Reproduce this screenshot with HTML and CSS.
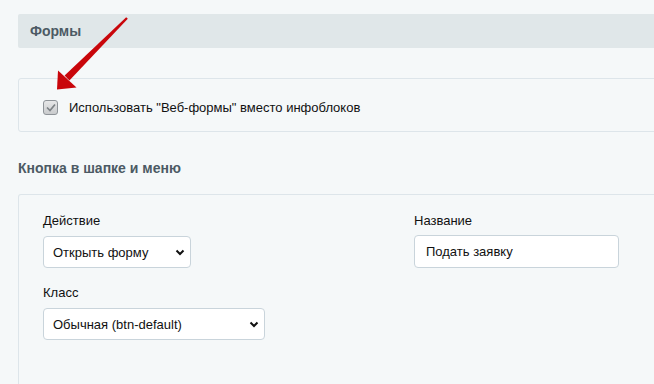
FILE: index.html
```html
<!DOCTYPE html>
<html lang="ru">
<head>
<meta charset="utf-8">
<link rel="stylesheet" href="styles.css">
</head>
<body>
<div class="page">
  <div class="section-head">Формы</div>
  <div class="box box-check">
    <label class="check-row">
      <span class="checkbox"><svg width="10" height="9" viewBox="0 0 10 9"><path d="M1 4.5 L4 7.5 L9 1.5" fill="none" stroke="#7d8286" stroke-width="1.7"/></svg></span>
      <span>Использовать "Веб-формы" вместо инфоблоков</span>
    </label>
  </div>
  <h3 class="sub-head">Кнопка в шапке и меню</h3>
  <div class="box box-form">
    <div class="form-grid">
      <div class="field">
        <div class="label">Действие</div>
        <div class="select sel-action">Открыть форму<span class="chev"><svg width="10" height="7" viewBox="0 0 10 7"><path d="M1.5 1.5 L5 5 L8.5 1.5" fill="none" stroke="#111" stroke-width="2"/></svg></span></div>
      </div>
      <div class="field">
        <div class="label">Название</div>
        <div class="input">Подать заявку</div>
      </div>
      <div class="field">
        <div class="label">Класс</div>
        <div class="select sel-class">Обычная (btn-default)<span class="chev"><svg width="10" height="7" viewBox="0 0 10 7"><path d="M1.5 1.5 L5 5 L8.5 1.5" fill="none" stroke="#111" stroke-width="2"/></svg></span></div>
      </div>
    </div>
  </div>
</div>
<svg class="arrow" width="90" height="90" viewBox="0 0 90 90">
  <path d="M87.8 8.8 L86.2 7.2 L24.6 65.6 L29.4 70.4 Z" fill="#c9060b"/>
  <path d="M17 79.5 L18 60.5 L36.5 77.5 Z" fill="#c9060b"/>
</svg>
</body>
</html>
```
FILE: styles.css
```css
html, body {
  margin: 0;
  padding: 0;
  background: #f5f8f9;
  overflow: hidden;
  width: 654px;
  height: 384px;
}
body {
  font-family: "Liberation Sans", Arial, sans-serif;
  font-size: 13px;
  color: #111;
  position: relative;
}
.page {
  padding: 14px 0 0 18px;
}
.section-head {
  height: 34px;
  background: #e0e7e9;
  border-radius: 2px 0 0 2px;
  font-size: 14px;
  font-weight: bold;
  color: #4c5a64;
  line-height: 34px;
  padding-left: 12px;
  margin-right: -10px;
}
.box {
  border: 1px solid #dde5ea;
  border-radius: 3px 0 0 3px;
  margin-right: -10px;
  background: #f5f8f9;
}
.box-check {
  margin-top: 30px;
  height: 52px;
  display: flex;
  align-items: center;
  padding-left: 24px;
}
.check-row {
  display: flex;
  align-items: center;
  gap: 11px;
  margin-top: 4px;
}
.checkbox {
  width: 13px;
  height: 13px;
  border: 1px solid #8f9499;
  border-radius: 3px;
  background: linear-gradient(#e6e7e8, #c9cbcd);
  display: flex;
  align-items: center;
  justify-content: center;
}
.sub-head {
  margin: 0;
  font-size: 14px;
  font-weight: bold;
  color: #4c5a64;
  height: 62px;
  line-height: 72px;
}
.box-form {
  height: 220px;
  padding: 17px 0 0 24px;
  border-bottom: none;
}
.form-grid {
  display: grid;
  grid-template-columns: 371px 1fr;
  row-gap: 16px;
}
.label {
  line-height: 17px;
  margin-bottom: 7px;
  color: #111;
}
.select, .input {
  box-sizing: border-box;
  height: 32px;
  border: 1px solid #c9d4db;
  border-radius: 4px;
  background: #fff;
  display: flex;
  align-items: center;
  padding-left: 9px;
  position: relative;
}
.sel-action { width: 148px; }
.sel-class { width: 222px; }
.input { width: 205px; height: 33px; margin-top: -1px; padding-left: 11px; }
.chev {
  position: absolute;
  right: 5px;
  top: 12px;
  display: flex;
}
.arrow {
  position: absolute;
  left: 40px;
  top: 10px;
}
```
